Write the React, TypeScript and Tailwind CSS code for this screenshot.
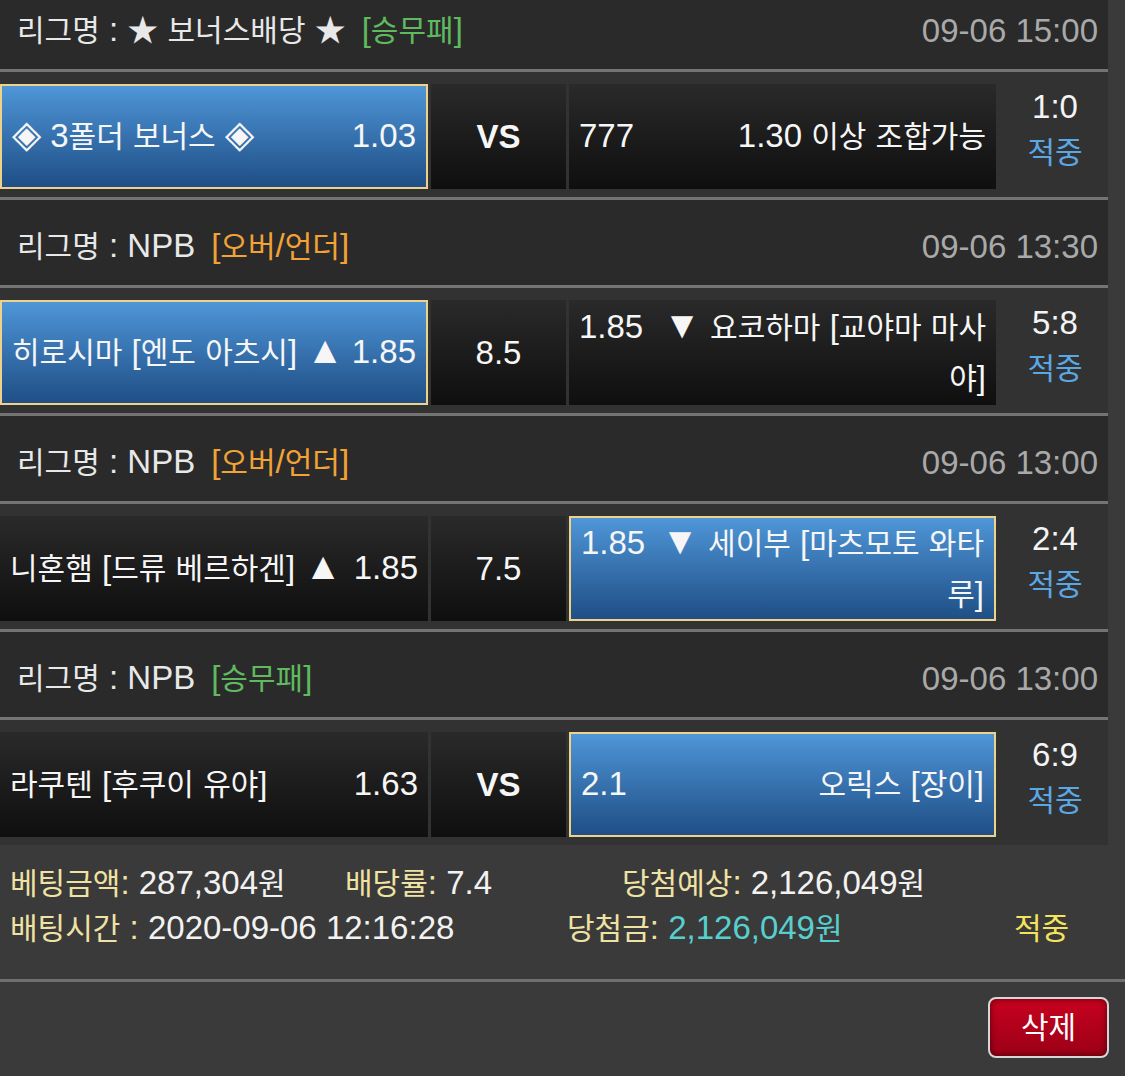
import React from "react";

const SPLIT = /([\uAC00-\uD7A3]+|[★◈▲▼])/;

function K({ children }: { children: string }) {
  const parts = children.split(SPLIT);
  return (
    <>
      {parts.map((p, i) => {
        if (i % 2 === 0) return p;
        if (p === "★")
          return (
            <span key={i} className="text-[31px] leading-none">
              {p}
            </span>
          );
        if (/[◈▲▼]/.test(p))
          return (
            <span key={i} className="text-[38px] leading-none">
              {p}
            </span>
          );
        return (
          <span key={i} className="text-[30px]">
            {p}
          </span>
        );
      })}
    </>
  );
}

type Side = { left: string; right: string; selected?: boolean; second?: string };

type Match = {
  label: string;
  tag: string;
  tagColor: "green" | "orange";
  time: string;
  home: Side;
  mid: string;
  midBold?: boolean;
  away: Side;
  score: string;
};

const matches: Match[] = [
  {
    label: "리그명 : ★ 보너스배당 ★",
    tag: "[승무패]",
    tagColor: "green",
    time: "09-06 15:00",
    home: { left: "◈ 3폴더 보너스 ◈", right: "1.03", selected: true },
    mid: "VS",
    midBold: true,
    away: { left: "777", right: "1.30 이상 조합가능" },
    score: "1:0",
  },
  {
    label: "리그명 : NPB",
    tag: "[오버/언더]",
    tagColor: "orange",
    time: "09-06 13:30",
    home: { left: "히로시마 [엔도 아츠시] ▲", right: "1.85", selected: true },
    mid: "8.5",
    away: { left: "1.85", right: "▼ 요코하마 [교야마 마사", second: "야]" },
    score: "5:8",
  },
  {
    label: "리그명 : NPB",
    tag: "[오버/언더]",
    tagColor: "orange",
    time: "09-06 13:00",
    home: { left: "니혼햄 [드류 베르하겐] ▲", right: "1.85" },
    mid: "7.5",
    away: { left: "1.85", right: "▼ 세이부 [마츠모토 와타", second: "루]", selected: true },
    score: "2:4",
  },
  {
    label: "리그명 : NPB",
    tag: "[승무패]",
    tagColor: "green",
    time: "09-06 13:00",
    home: { left: "라쿠텐 [후쿠이 유야]", right: "1.63" },
    mid: "VS",
    midBold: true,
    away: { left: "2.1", right: "오릭스 [장이]", selected: true },
    score: "6:9",
  },
];

function Cell({ side, width }: { side: Side; width: string }) {
  const base = side.selected
    ? "border-2 border-[#efd28a] bg-linear-to-b from-[#4f96d8] to-[#1f4f86] px-[10px]"
    : "bg-linear-to-b from-[#2a2a2a] to-[#0f0f0f] px-[10px]";
  return (
    <div className={`${width} h-[105px] shrink-0 flex flex-col justify-center text-[#f6f6f6] leading-[50px] ${base}`}>
      <div className="flex justify-between whitespace-nowrap">
        <span>
          <K>{side.left}</K>
        </span>
        <span>
          <K>{side.right}</K>
        </span>
      </div>
      {side.second ? (
        <div className="text-right">
          <K>{side.second}</K>
        </div>
      ) : null}
    </div>
  );
}

function Header({ m }: { m: Match }) {
  return (
    <div className="w-[1108px] h-[91px] border-y-[3px] border-[#747474] bg-[#2a2a2a] flex items-center justify-between pl-[17px] pr-[10px] pt-[8px]">
      <div className="text-[#e8e8e8] whitespace-nowrap leading-[40px]">
        <K>{m.label}</K>
        <span className={`ml-[16px] ${m.tagColor === "green" ? "text-[#5fba5f]" : "text-[#f2a236]"}`}>
          <K>{m.tag}</K>
        </span>
      </div>
      <div className="text-[#a9a9a9] leading-[40px]">{m.time}</div>
    </div>
  );
}

function Row({ m }: { m: Match }) {
  return (
    <div className="w-[1108px] h-[125px] pt-[12px] bg-[#323232] flex gap-[3px]">
      <Cell side={m.home} width="w-[428px]" />
      <div className="w-[135px] h-[105px] shrink-0 bg-linear-to-b from-[#2a2a2a] to-[#0f0f0f] flex items-center justify-center text-[#f6f6f6]">
        <span className={m.midBold ? "font-bold" : ""}>{m.mid}</span>
      </div>
      <Cell side={m.away} width="w-[427px]" />
      <div className="w-[112px] shrink-0 flex flex-col items-center leading-[45px]">
        <span className="text-[#f4f4f4]">{m.score}</span>
        <span className="text-[#5aa7e4]">
          <K>적중</K>
        </span>
      </div>
    </div>
  );
}

export default function App() {
  return (
    <div className="w-[1125px] h-[1076px] overflow-hidden bg-[#3a3a3a] text-[33px] font-['Liberation_Sans','Noto_Sans_CJK_KR',sans-serif]">
      <div className="-mt-[19px]">
        {matches.map((m, i) => (
          <React.Fragment key={i}>
            <Header m={m} />
            <Row m={m} />
          </React.Fragment>
        ))}
      </div>
      <div className="h-[137px] border-b-[3px] border-[#6f6f6f] pt-[16px] pl-[10px] leading-[44px] whitespace-nowrap">
        <div className="flex">
          <span className="w-[335px]">
            <span className="text-[#efe2a3]">
              <K>베팅금액:</K>
            </span>{" "}
            <span className="text-[#f2f2f2]">
              287,304<K>원</K>
            </span>
          </span>
          <span className="w-[277px]">
            <span className="text-[#efe2a3]">
              <K>배당률:</K>
            </span>{" "}
            <span className="text-[#f2f2f2]">7.4</span>
          </span>
          <span>
            <span className="text-[#efe2a3]">
              <K>당첨예상:</K>
            </span>{" "}
            <span className="text-[#f2f2f2]">
              2,126,049<K>원</K>
            </span>
          </span>
        </div>
        <div className="flex">
          <span className="w-[557px]">
            <span className="text-[#efe2a3]">
              <K>배팅시간 :</K>
            </span>{" "}
            <span className="text-[#f2f2f2]">2020-09-06 12:16:28</span>
          </span>
          <span className="w-[447px]">
            <span className="text-[#efe2a3]">
              <K>당첨금:</K>
            </span>{" "}
            <span className="text-[#58cfcf]">
              2,126,049<K>원</K>
            </span>
          </span>
          <span className="text-[#f3e45c]">
            <K>적중</K>
          </span>
        </div>
      </div>
      <div className="flex justify-end pt-[15px] pr-[16px]">
        <button className="w-[121px] h-[61px] rounded-[8px] border-2 border-[#d6d6d6] bg-linear-to-b from-[#c8021f] to-[#9b0017] text-white shadow-[inset_0_0_6px_rgba(0,0,0,0.55)] flex items-center justify-center">
          <K>삭제</K>
        </button>
      </div>
    </div>
  );
}
